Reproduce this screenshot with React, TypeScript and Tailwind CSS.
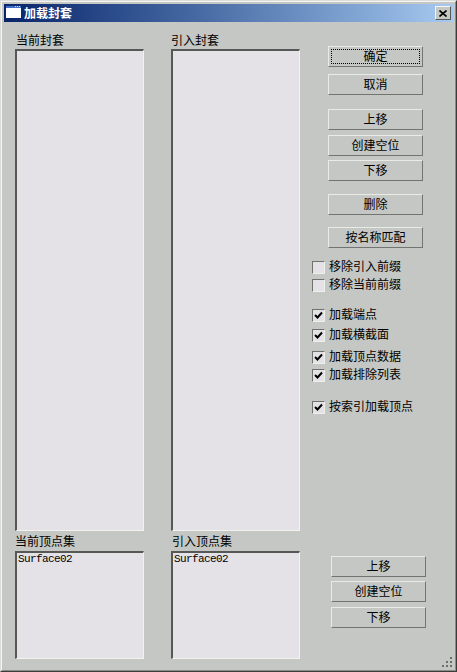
const font = "[font-family:'Noto_Sans_CJK_SC','Noto_Sans',sans-serif]";

function Btn({ label, mt, focus }: { label: string; mt: string; focus?: boolean }) {
  return (
    <div className={`${mt} relative flex h-[21px] w-[95px] items-center justify-center border border-t-[#e8ebe6] border-l-[#e8ebe6] border-r-[#72756f] border-b-[#72756f] bg-[#c4c7c3] pb-[2px] text-[12px] leading-none text-black`}>
      {focus && <div className="absolute inset-x-[2px] inset-y-[2px] border border-dotted border-black" />}
      <span className="relative">{label}</span>
    </div>
  );
}

function Check({ label, mt, on }: { label: string; mt: string; on?: boolean }) {
  return (
    <div className={`${mt} flex h-[13px] items-center`}>
      <div className="flex h-[13px] w-[13px] items-center justify-center border border-t-[#6f726d] border-l-[#6f726d] border-r-[#eef0ec] border-b-[#eef0ec] bg-[#e4e2e6]">
        {on && (
          <svg width="9" height="9" viewBox="0 0 9 9">
            <path d="M1 4 L3.5 6.5 L8 1.5" fill="none" stroke="#000" strokeWidth="2" />
          </svg>
        )}
      </div>
      <span className="ml-[4px] whitespace-nowrap pb-[4px] text-[12px] leading-none text-black">{label}</span>
    </div>
  );
}

function ListBox({ h, item }: { h: string; item?: string }) {
  return (
    <div className={`${h} w-[129px] border border-t-2 border-l-2 border-t-[#555855] border-l-[#555855] border-r-[#f2f3ef] border-b-[#f2f3ef] bg-[#e4e2e6] pl-[1px]`}>
      {item && <div className="font-['Liberation_Mono',monospace] text-[11px] leading-[13px] tracking-[-0.6px] text-black">{item}</div>}
    </div>
  );
}

function Column({ top, bottom, ml, topMl, bottomMl }: { top: string; bottom: string; ml: string; topMl: string; bottomMl: string }) {
  return (
    <div className={`${ml} flex w-[129px] flex-col`}>
      <div className={`${topMl} h-[27px] whitespace-nowrap pt-[11px] text-[12px] leading-[14px] text-black`}>{top}</div>
      <ListBox h="h-[482px]" />
      <div className={`${bottomMl} h-[20px] whitespace-nowrap pt-[3px] text-[12px] leading-[14px] text-black`}>{bottom}</div>
      <ListBox h="h-[108px]" item="Surface02" />
    </div>
  );
}

export default function App() {
  return (
    <div className={`${font} h-[672px] w-[457px] overflow-hidden border border-t-[#dcdcd8] border-l-[#dcdcd8] border-r-[#3c3c3c] border-b-[#3c3c3c] bg-[#c4c7c3]`}>
      <div className="flex h-full flex-col border border-t-[#f4f4f2] border-l-[#f4f4f2] border-r-[#8a8c88] border-b-[#8a8c88] px-[2px] pt-[2px]">
        <div className="flex h-[18px] shrink-0 items-center bg-gradient-to-r from-[#0a246a] to-[#a6caf0] pl-[2px] pr-[2px]">
          <svg width="15" height="14" viewBox="0 0 15 14" className="shrink-0">
            <rect width="15" height="12" y="0" fill="#ffffff" />
            <rect width="15" height="2" y="0" fill="#3f6fc8" />
            <rect x="9" y="0" width="1" height="1" fill="#cfe0f8" />
            <rect x="11" y="0" width="1" height="1" fill="#cfe0f8" />
            <rect x="13" y="0" width="1" height="1" fill="#cfe0f8" />
          </svg>
          <span className="ml-[3px] text-[12px] font-bold leading-none text-white">加载封套</span>
          <div className="ml-auto flex h-[14px] w-[16px] items-center justify-center border border-t-[#f4f4f2] border-l-[#f4f4f2] border-r-[#555855] border-b-[#555855] bg-[#c4c7c3]">
            <svg width="8" height="7" viewBox="0 0 8 7">
              <path d="M0.5 0.5 L7.5 6.5 M7.5 0.5 L0.5 6.5" stroke="#000" strokeWidth="1.6" fill="none" />
            </svg>
          </div>
        </div>
        <div className="relative flex flex-1">
          <Column ml="ml-[11px]" topMl="ml-[1px]" bottomMl="ml-0" top="当前封套" bottom="当前顶点集" />
          <Column ml="ml-[27px]" topMl="ml-0" bottomMl="ml-[1px]" top="引入封套" bottom="引入顶点集" />
          <div className="ml-[12px] flex w-[120px] flex-col">
            <div className="ml-[16px] flex flex-col">
              <Btn mt="mt-[24px]" label="确定" focus />
              <Btn mt="mt-[7px]" label="取消" />
              <Btn mt="mt-[14px]" label="上移" />
              <Btn mt="mt-[5px]" label="创建空位" />
              <Btn mt="mt-[4px]" label="下移" />
              <Btn mt="mt-[13px]" label="删除" />
              <Btn mt="mt-[12px]" label="按名称匹配" />
            </div>
            <Check mt="mt-[13px]" label="移除引入前缀" />
            <Check mt="mt-[5px]" label="移除当前前缀" />
            <Check mt="mt-[17px]" label="加载端点" on />
            <Check mt="mt-[7px]" label="加载横截面" on />
            <Check mt="mt-[9px]" label="加载顶点数据" on />
            <Check mt="mt-[5px]" label="加载排除列表" on />
            <Check mt="mt-[19px]" label="按索引加载顶点" on />
            <div className="ml-[19px] mt-[142px] flex flex-col">
              <Btn mt="mt-0" label="上移" />
              <Btn mt="mt-[4px]" label="创建空位" />
              <Btn mt="mt-[5px]" label="下移" />
            </div>
          </div>
          <svg width="12" height="12" viewBox="0 0 12 12" className="absolute bottom-[1px] right-0">
            <g fill="#6b6e6a">
              <rect x="9" y="0" width="2" height="2" />
              <rect x="5" y="4" width="2" height="2" />
              <rect x="9" y="4" width="2" height="2" />
              <rect x="1" y="8" width="2" height="2" />
              <rect x="5" y="8" width="2" height="2" />
              <rect x="9" y="8" width="2" height="2" />
            </g>
          </svg>
        </div>
      </div>
    </div>
  );
}
